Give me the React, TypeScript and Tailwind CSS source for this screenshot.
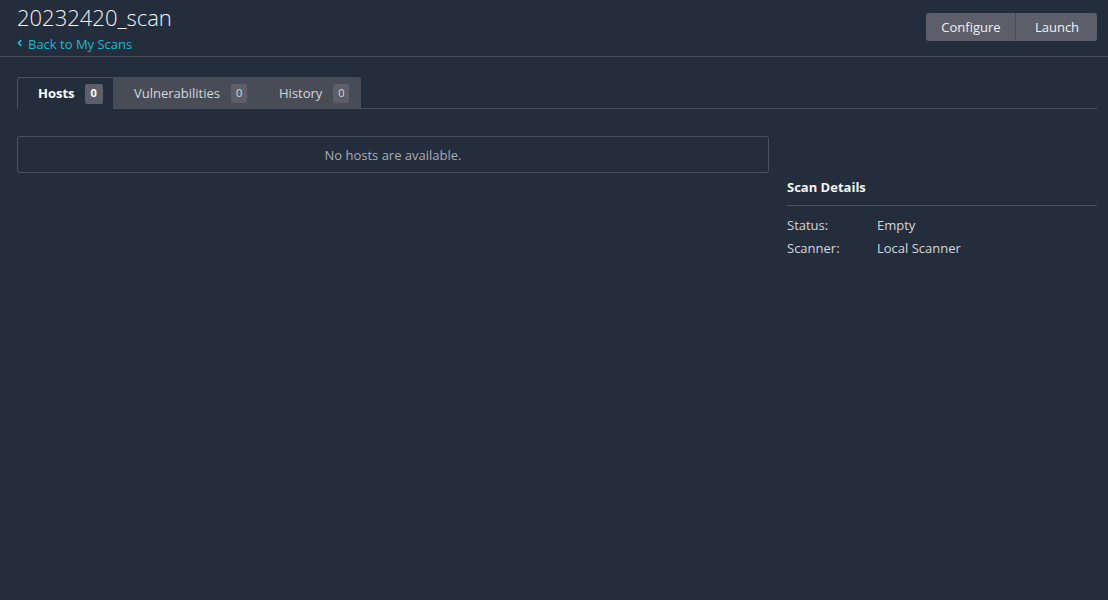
import React from "react";

function Badge({ active, children }: { active?: boolean; children: React.ReactNode }) {
  return (
    <span className={active
      ? "ml-[10px] flex h-[20px] w-[18px] items-center justify-center rounded-[2px] bg-[#5c5f69] text-[11px] font-bold text-white"
      : "ml-[11px] flex h-[19px] w-[16px] items-center justify-center rounded-[2px] bg-[#5c5f69] text-[11px] text-[#d8dade]"}>
      {children}
    </span>
  );
}

export default function App() {
  return (
    <div className="h-[600px] w-[1108px] overflow-hidden bg-[#242d3c] font-['Open_Sans',sans-serif] text-[13px] text-[#d5d7da]">
      <header className="flex h-[57px] items-start justify-between border-b border-[#4b515c] pl-[17px] pr-[11px]">
        <div>
          <h1 className="mt-[2px] text-[22px] font-light leading-[30px] text-[#f2f3f4]">20232420_scan</h1>
          <a className="mt-[3px] flex items-center text-[13px] leading-[18px] text-[#1fb8cd]">
            <svg width="5" height="8" viewBox="0 0 5 8" className="mr-[6px] -mt-[2px]">
              <path d="M4.2 1 1.6 4 4.2 7" fill="none" stroke="#1fb8cd" strokeWidth="1.9" />
            </svg>
            Back to My Scans
          </a>
        </div>
        <div className="mt-[13px] flex h-[28px] overflow-hidden rounded-[3px] bg-[#5c5f69] text-[#f0f1f2]">
          <button className="w-[90px] border-r border-[#484c57] pl-[1px] pt-[2px] text-center">Configure</button>
          <button className="w-[81px] pl-[1px] pt-[2px] text-center">Launch</button>
        </div>
      </header>

      <div className="px-[17px] pr-[11px] pt-[20px]">
        <nav className="flex h-[32px] border-b border-[#4b515c]">
          <div className="-mb-px flex h-[32px] w-[96px] items-center rounded-tl-[3px] border-l border-t border-[#4b515c] bg-[#242d3c] pl-[20px] pr-[10px] font-bold text-white">
            Hosts
            <Badge active>0</Badge>
          </div>
          <div className="flex h-[31px] w-[248px] items-center rounded-tr-[3px] bg-[#484c57] pt-[2px]">
            <div className="flex items-center pl-[21px]">
              Vulnerabilities
              <Badge>0</Badge>
            </div>
            <div className="ml-[32px] flex items-center">
              History
              <Badge>0</Badge>
            </div>
          </div>
        </nav>

        <div className="mt-[27px] flex gap-[18px]">
          <div className="flex h-[37px] w-[752px] items-center justify-center rounded-[3px] border border-[#4b515c] pt-[2px] text-[#a9acb2]">
            No hosts are available.
          </div>
          <aside className="w-[310px] pt-[41px]">
            <h2 className="border-b border-[#4b515c] pb-[7px] text-[13px] font-bold leading-[21px] text-[#f2f3f4]">Scan Details</h2>
            <dl className="mt-[8px] leading-[23px]">
              <div className="flex">
                <dt className="w-[90px]">Status:</dt>
                <dd>Empty</dd>
              </div>
              <div className="flex">
                <dt className="w-[90px]">Scanner:</dt>
                <dd>Local Scanner</dd>
              </div>
            </dl>
          </aside>
        </div>
      </div>
    </div>
  );
}
